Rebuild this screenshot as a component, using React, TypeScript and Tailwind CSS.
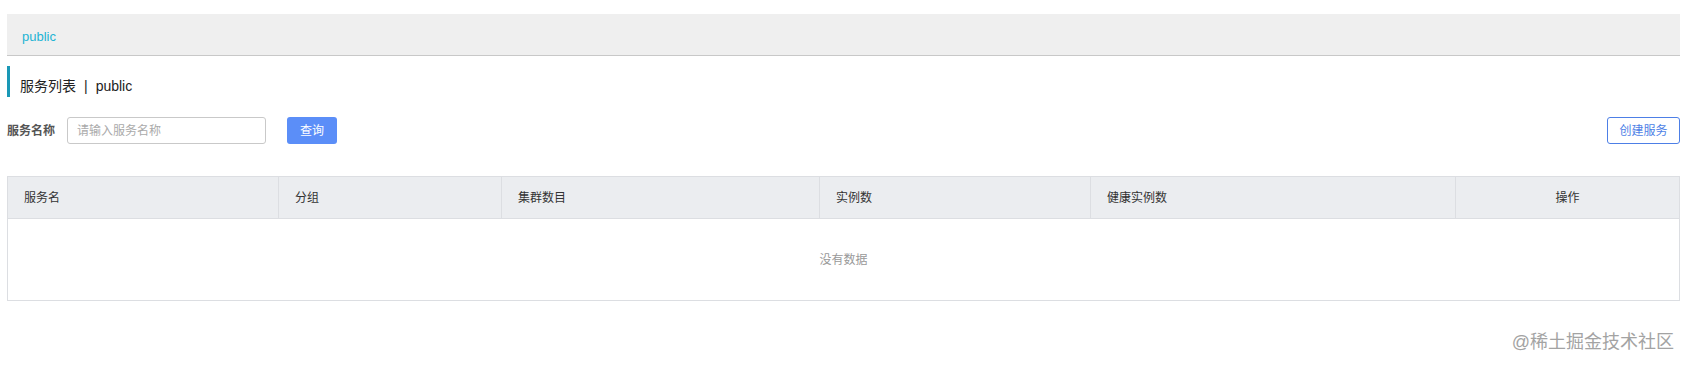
import React from "react";

const columns = [
  { title: "服务名", width: "w-[271px]", align: "text-left" },
  { title: "分组", width: "w-[223px]", align: "text-left" },
  { title: "集群数目", width: "w-[318px]", align: "text-left" },
  { title: "实例数", width: "w-[271px]", align: "text-left" },
  { title: "健康实例数", width: "w-[365px]", align: "text-left" },
  { title: "操作", width: "flex-1", align: "text-center" },
];

export default function App() {
  return (
    <div className="w-[1688px] h-[366px] bg-white pl-[7px] pr-[8px] pt-[14px] font-['Liberation_Sans','Noto_Sans_CJK_SC',sans-serif] text-[#333]">
      {/* breadcrumb bar */}
      <div className="h-[42px] bg-[#efefef] border-b border-[#c8c8c8] flex items-center pl-[15px] pt-[4px]">
        <span className="text-[13px] text-[#1db4d4]">public</span>
      </div>

      {/* page title */}
      <div className="mt-[10px] h-[31px] border-l-[3px] border-[#1a98b6] pl-[10px] pt-[10px] flex items-center text-[14px] text-[#222]">
        <span>服务列表</span>
        <span className="mx-[8px]">|</span>
        <span>public</span>
      </div>

      {/* search row */}
      <div className="mt-[20px] h-[27px] flex items-center">
        <label className="text-[12px] font-bold text-[#555] w-[60px]">服务名称</label>
        <input
          className="w-[199px] h-[27px] border border-[#c9c9c9] rounded-[3px] px-[9px] text-[12px] outline-none placeholder:text-[#aaa]"
          placeholder="请输入服务名称"
        />
        <button className="ml-[21px] w-[50px] h-[27px] rounded-[3px] bg-[#5b8ef8] text-white text-[12px]">
          查询
        </button>
        <button className="ml-auto w-[73px] h-[27px] rounded-[3px] border border-[#4d7fe6] bg-white text-[#4d7fe6] text-[12px]">
          创建服务
        </button>
      </div>

      {/* table */}
      <div className="mt-[32px] border border-[#dcdee2]">
        <div className="flex h-[42px] bg-[#ebedf0] border-b border-[#dcdee2]">
          {columns.map((col, index) => (
            <div
              key={index}
              className={`${col.width} ${col.align} ${index < columns.length - 1 ? "border-r border-[#dcdee2]" : ""} flex items-center px-[16px] text-[12px] text-[#333]`}
            >
              <span className={index === columns.length - 1 ? "w-full text-center" : ""}>{col.title}</span>
            </div>
          ))}
        </div>
        <div className="h-[81px] flex items-center justify-center text-[12px] text-[#999]">
          没有数据
        </div>
      </div>

      <div className="mt-[29px] pr-[6px] text-right text-[18px] leading-[24px] text-[#a3a3a3]">
        @稀土掘金技术社区
      </div>
    </div>
  );
}
